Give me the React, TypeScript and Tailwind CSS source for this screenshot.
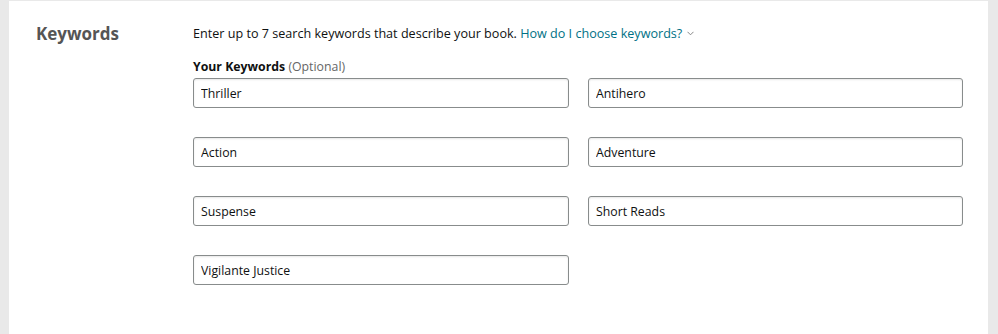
import React from 'react';

const keywords = ['Thriller', 'Antihero', 'Action', 'Adventure', 'Suspense', 'Short Reads', 'Vigilante Justice'];

export default function App() {
  return (
    <div
      className="w-[998px] h-[334px] bg-[#e9e9e9] pl-[9px] pr-[10px] pt-px"
      style={{ fontFamily: '"Open Sans", "Noto Sans", Arial, sans-serif' }}
    >
      <div className="h-full bg-white flex">
        <div className="w-[184px] pl-[27px] pt-[21px]">
          <h2 className="text-[17px] font-bold text-[#555] leading-6">Keywords</h2>
        </div>
        <div className="pt-[23px] w-[770px]">
          <p className="text-[12.6px] text-[#0f1111] leading-5">
            Enter up to 7 search keywords that describe your book.{' '}
            <span className="text-[#007185]">
              How do I choose keywords?
              <svg className="inline-block ml-[5px] mb-[2px]" width="7" height="5" viewBox="0 0 7 5">
                <path d="M0.5 0.8 L3.5 3.8 L6.5 0.8" fill="none" stroke="#888" strokeWidth="1" />
              </svg>
            </span>
          </p>
          <div className="mt-[15px] text-[12.3px] leading-4 text-[#0f1111]">
            <span className="font-bold">Your Keywords</span> <span className="text-[#666]">(Optional)</span>
          </div>
          <div className="grid grid-cols-[376px_375px] gap-x-[19px] gap-y-[29px] mt-[3px]">
            {keywords.map(k => (
              <input
                key={k}
                defaultValue={k}
                className="h-[30px] border border-[#888c8c] rounded-[3px] px-[7px] text-[12.3px] text-[#0f1111] outline-none shadow-[inset_0_1px_2px_rgba(15,17,17,0.1)]"
              />
            ))}
          </div>
        </div>
      </div>
    </div>
  );
}
